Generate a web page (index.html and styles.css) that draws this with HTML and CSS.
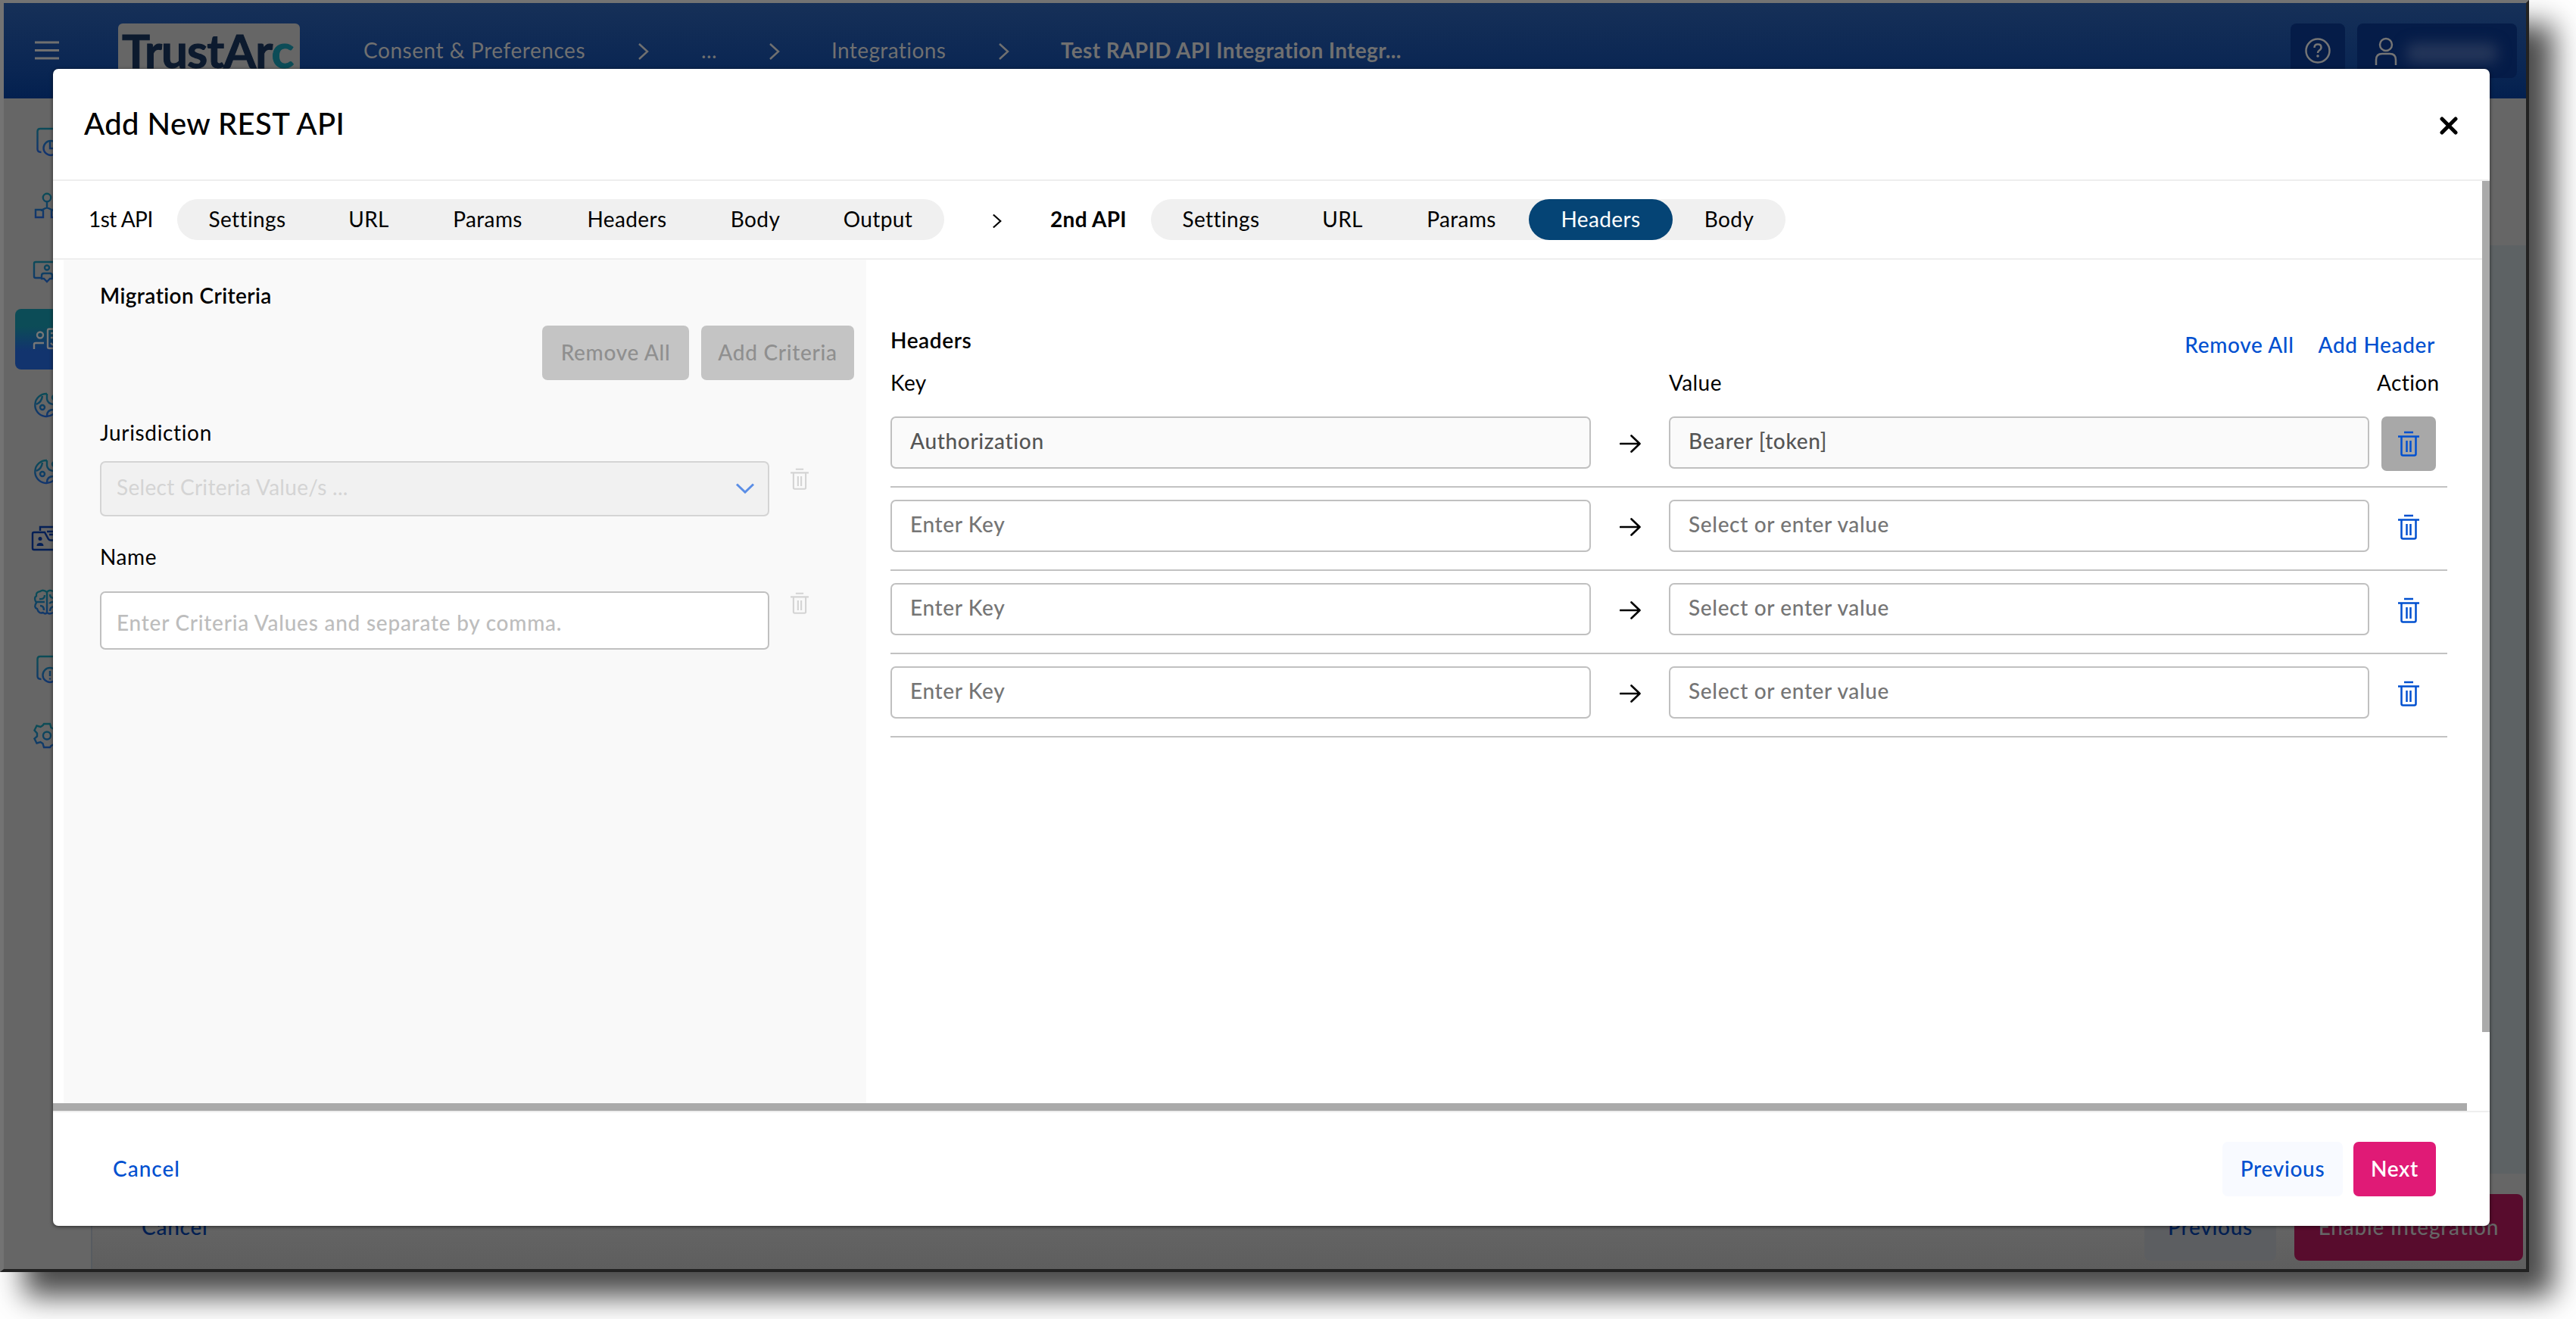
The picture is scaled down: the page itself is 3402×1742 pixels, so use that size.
FILE: index.html
```html
<!DOCTYPE html>
<html lang="en">
<head>
<meta charset="utf-8">
<title>Add New REST API</title>
<link rel="stylesheet" href="styles.css">
</head>
<body>
<svg class="defs" aria-hidden="true">
  <defs>
    <linearGradient id="ig" gradientUnits="userSpaceOnUse" x1="0" y1="28" x2="0" y2="60"><stop offset="0" stop-color="#0c4c57"/><stop offset="1" stop-color="#12346e"/></linearGradient>
    <symbol id="trash" viewBox="0 0 28 34"><path d="M8 2h12M0 7.500h28M4.500 8v22.500q0 2 2 2h15q2 0 2-2V8M11.500 13v15M16.500 13v15"/></symbol>
    <symbol id="arrow" viewBox="0 0 28 24"><path d="M1 12h25M15.500 1.500L26.500 12L15.500 22.500"/></symbol>
    <symbol id="crumb" viewBox="0 0 14 22"><path d="M1 1L12 11L1 21"/></symbol>
  </defs>
</svg>
<div class="window">
  <header class="topbar">
    <svg class="burger" viewBox="0 0 32 26"><path d="M0 2h32M0 12.500h32M0 23h32"/></svg>
    <div class="logo">TrustAr<span class="logo-c">c</span></div>
    <nav class="crumbs">
      <span class="crumb c1">Consent &amp; Preferences</span>
      <svg class="sep"><use href="#crumb"/></svg>
      <span class="crumb c2">...</span>
      <svg class="sep"><use href="#crumb"/></svg>
      <span class="crumb c3">Integrations</span>
      <svg class="sep"><use href="#crumb"/></svg>
      <span class="crumb c4">Test RAPID API Integration Integr...</span>
    </nav>
    <div class="help"><svg viewBox="0 0 36 36"><circle cx="18" cy="18" r="15.500"/><path d="M13.500 14q0-4.500 4.500-4.500t4.500 4q0 2.500-2.500 4q-2 1.300-2 3.500"/><circle class="dot" cx="18" cy="25" r="1.800"/></svg></div>
    <div class="user"><svg viewBox="0 0 30 38"><circle cx="15" cy="10" r="8"/><path d="M2 37V30q0-8 8-8h10q8 0 8 8v7"/></svg><span class="smudge"></span></div>
  </header>
  <div class="page">
    <aside class="side">
      <svg viewBox="0 0 115 88"><path d="M70 31H48q-3.500 0-3.500 3.500V58q0 4 5 4M61 47V57H71"/><circle cx="62" cy="56.500" r="9.500"/></svg>
      <svg viewBox="0 0 115 88"><circle cx="57" cy="34" r="5.200"/><path d="M57 39v9M50 52v-1.500L57 47l7 3.500V52M42 50h10v10H42zM63 50h10v10H63z"/></svg>
      <svg viewBox="0 0 115 88"><path d="M50 52H42q-2 0-2-2V33q0-2 2-2h33M50 53V49q0-3 3-3h8q3 0 3 3v4h-3l-4 4-4-4z"/><circle cx="57" cy="38.500" r="3"/></svg>
      <svg class="on" viewBox="0 0 115 88"><rect class="tile" x="15" y="5" width="100" height="80" rx="8"/><circle cx="48" cy="39.500" r="4"/><path d="M40 58V52q0-2 2-2H53M75 31.500H60q-2 0-2 2V55q0 2 2 2h15M62 37h5M62 43h5M62 50l3 3"/></svg>
      <svg viewBox="0 0 115 88"><path d="M57 29A15 15 0 1 0 71 47M57 29V36q1 6 8 7M43 43q7-3 8-11M57 58q0-8 9-8"/><circle cx="51" cy="47" r="3"/><circle cx="67" cy="34" r="3"/></svg>
      <svg viewBox="0 0 115 88"><path d="M57 29A15 15 0 1 0 71 47M57 29V36q1 6 8 7M43 43q7-3 8-11M57 58q0-8 9-8"/><circle cx="51" cy="47" r="3"/><circle cx="67" cy="34" r="3"/></svg>
      <svg class="folder" viewBox="0 0 115 88"><path d="M48 34V29H75M70 59H40q-2 0-2-2V38q0-2 2-2H54l5 9q1 1.500 3 1.500h10M57 35h8M60 39h5"/><circle class="fill" cx="48" cy="44.500" r="2.500"/><path class="fill" d="M43.500 54q0-4 4.500-4t4.500 4z"/></svg>
      <svg viewBox="0 0 115 88"><path d="M57 26V54M57 27Q52 23 48 26Q42 27 43 32Q39 35 43 41Q39 47 44 49Q46 56 52 54Q55 57 57 54M57 27Q60 23 65 26M57 54Q60 57 65 54M54 31q0 6-7 5M43 40h11M48 45q5 0 5 6M61 30q0 5 6 5M60 42q3-3 8-2M61 52q0-5 5-6"/></svg>
      <svg viewBox="0 0 115 88"><path d="M70 24H48q-3.500 0-3.500 3.500V50q0 4 5 4M61 43V50M61 52.500v2"/><circle cx="61" cy="48.500" r="9.500"/></svg>
      <svg viewBox="0 0 115 88"><path d="M53 25h8l1.500 5 4 2 5-1.500 3 6-4 4v4l4 3-3 6-5-1.500-4 2L61 56h-8l-1.500-5-3-2-5 1.500-3-6 3.500-3v-4l-3.500-4 3-6 5 1.500 3-2z"/><circle cx="57" cy="40.500" r="5"/></svg>
    </aside>
    <main class="main">
      <div class="canvas"></div>
      <footer class="page-foot">
        <span class="bg-cancel">Cancel</span>
        <span class="bg-prev">Previous</span>
        <span class="bg-enable">Enable Integration</span>
      </footer>
    </main>
  </div>

  <section class="modal">
    <header class="modal-head">
      <h1>Add New REST API</h1>
      <svg class="close" viewBox="0 0 24 24"><path d="M3 3L21 21M21 3L3 21"/></svg>
    </header>
    <div class="steps">
      <span class="api api1">1st API</span>
      <div class="pill">
        <span class="t1">Settings</span><span class="t2">URL</span><span class="t3">Params</span><span class="t4">Headers</span><span class="t5">Body</span><span class="t6">Output</span>
      </div>
      <svg class="next-step" viewBox="0 0 14 22"><use href="#crumb"/></svg>
      <span class="api api2">2nd API</span>
      <div class="pill">
        <span class="t1">Settings</span><span class="t2">URL</span><span class="t3">Params</span><span class="t4 active">Headers</span><span class="t5">Body</span>
      </div>
    </div>
    <div class="body">
      <div class="criteria">
        <h2>Migration Criteria</h2>
        <div class="criteria-actions"><button class="remove">Remove All</button><button class="add">Add Criteria</button></div>
        <label class="jur">Jurisdiction</label>
        <div class="field-row">
          <div class="select"><span>Select Criteria Value/s ...</span><svg viewBox="0 0 26 14"><path d="M2 1.500L13 12L24 1.500"/></svg></div>
          <svg class="trash-off"><use href="#trash"/></svg>
        </div>
        <label class="name">Name</label>
        <div class="field-row second">
          <div class="text-input"><span>Enter Criteria Values and separate by comma.</span></div>
          <svg class="trash-off"><use href="#trash"/></svg>
        </div>
      </div>
      <div class="headers">
        <div class="headers-top">
          <h2>Headers</h2>
          <div class="links"><a class="l1">Remove All</a><a class="l2">Add Header</a></div>
        </div>
        <div class="row cols"><span>Key</span><span></span><span>Value</span><span class="action">Action</span></div>
        <div class="row entry"><div class="box ro"><span class="k1">Authorization</span></div><svg class="arrow"><use href="#arrow"/></svg><div class="box ro"><span class="v1">Bearer [token]</span></div><div class="del off"><svg><use href="#trash"/></svg></div></div>
        <div class="row entry"><div class="box"><span class="k2">Enter Key</span></div><svg class="arrow"><use href="#arrow"/></svg><div class="box"><span class="v2">Select or enter value</span></div><div class="del"><svg><use href="#trash"/></svg></div></div>
        <div class="row entry"><div class="box"><span class="k2">Enter Key</span></div><svg class="arrow"><use href="#arrow"/></svg><div class="box"><span class="v2">Select or enter value</span></div><div class="del"><svg><use href="#trash"/></svg></div></div>
        <div class="row entry"><div class="box"><span class="k2">Enter Key</span></div><svg class="arrow"><use href="#arrow"/></svg><div class="box"><span class="v2">Select or enter value</span></div><div class="del"><svg><use href="#trash"/></svg></div></div>
      </div>
    </div>
    <div class="hscroll"></div>
    <footer class="modal-foot">
      <a class="cancel">Cancel</a>
      <button class="prev">Previous</button>
      <button class="next">Next</button>
    </footer>
    <div class="vscroll"></div>
  </section>
</div>
</body>
</html>
```
FILE: styles.css
```css
* { box-sizing: border-box; }
body { margin: 0; width: 3402px; height: 1742px; overflow: hidden; background: #fff; font: 28px/34px Lato, "Noto Sans", sans-serif; letter-spacing: .4px; color: #000; }
svg { display: block; flex: none; fill: none; stroke: currentColor; stroke-width: 2.5; }
h1, h2 { margin: 0; }
button { font: inherit; letter-spacing: inherit; border: 0; padding: 0 0 3px; border-radius: 7px; white-space: nowrap; }
span, a, label { white-space: nowrap; }
.defs { position: absolute; width: 0; height: 0; }

.window { position: relative; width: 3340px; height: 1680px; border: solid; border-width: 4px 4px 4px 5px; border-color: #737373 #222 #222 #737373; box-shadow: 32px 32px 36px rgba(0,0,0,.71); display: flex; flex-direction: column; background: #666; }
.topbar { height: 126px; flex: none; display: flex; align-items: flex-start; padding: 27px 12px 0 41px; background: linear-gradient(#163058, #0a2653 70%, #03204f); color: #707070; }
.burger { width: 32px; height: 26px; margin-top: 23px; stroke-width: 3; }
.logo { width: 240px; height: 72px; margin-left: 78px; border-radius: 6px; background: #666; color: #0c1a2e; font-size: 62px; font-weight: 700; line-height: 70px; padding-left: 5px; letter-spacing: -1px; white-space: nowrap; -webkit-text-stroke: 1px currentColor; }
.logo-c { color: #0c4c57; }
.crumbs { display: flex; margin-left: 84px; height: 72px; align-items: center; padding-bottom: 3px; }
.c1 { width: 363px; letter-spacing: .55px; }
.sep { width: 14px; height: 22px; margin-top: 4px; }
.c2 { width: 90px; margin-left: 69px; }
.c3 { width: 221px; margin-left: 68px; }
.c4 { margin-left: 68px; font-weight: 700; letter-spacing: .35px; }
.help { width: 72px; height: 72px; margin-left: auto; border-radius: 8px; background: #051c48; display: grid; place-items: center; color: #757575; }
.help svg { width: 36px; height: 36px; }
.help .dot { fill: currentColor; stroke: none; }
.user { width: 211px; height: 72px; margin-left: 16px; border-radius: 8px; background: #051c48; display: flex; padding: 18px 0 0 23px; color: #757575; }
.user svg { width: 30px; height: 38px; }
.smudge { width: 120px; height: 26px; margin: 8px 0 0 12px; background: #26375a; filter: blur(9px); border-radius: 10px; }
.page { flex: 1; display: flex; min-height: 0; }
.side { width: 115px; padding-top: 9px; }
.side svg { width: 115px; height: 88px; stroke: url(#ig); stroke-width: 2.4; }
.side .on { stroke: #777; }
.side .tile { fill: url(#ig); stroke: none; }
.side .folder { stroke: #031f56; }
.side .fill { fill: #031f56; stroke: none; }
.main { flex: 1; display: flex; flex-direction: column; padding-top: 194px; border-left: 2px solid #575b60; }
.canvas { height: 1226px; background: #5d6264; }
.page-foot { flex: 1; display: flex; background: linear-gradient(#666 40%, #5e5e5e); padding: 27px 4px 0 65px; line-height: 87px; font-weight: 500; letter-spacing: .75px; }
.bg-cancel, .bg-prev, .bg-enable { height: 88px; border-radius: 8px; color: #021f52; }
.bg-prev { width: 174px; margin-left: auto; background: #5c5e61; text-align: center; }
.bg-enable { width: 302px; margin-left: 24px; background: #580c2d; color: #666; text-align: center; }

.modal { position: absolute; left: 65px; top: 87px; width: 3218px; height: 1528px; background: #fff; border-radius: 7px; box-shadow: 0 1px 5px rgba(0,0,0,.6); display: flex; flex-direction: column; }
.modal-head { height: 148px; display: flex; align-items: center; justify-content: space-between; padding: 0 42px 2px 41px; border-bottom: 2px solid #eee; }
h1 { font-size: 40px; line-height: 48px; font-weight: 500; letter-spacing: .4px; }
.close { width: 24px; height: 24px; stroke-width: 5; stroke-linecap: round; margin-top: 6px; }
.steps { height: 104px; margin-right: 10px; padding-left: 47px; display: flex; align-items: center; border-bottom: 2px solid #eee; }
.api1 { width: 117px; margin-top: -3px; letter-spacing: -.5px; }
.api2 { width: 133px; margin: -3px 0 0 64px; font-weight: 700; letter-spacing: .3px; }
.pill { height: 54px; border-radius: 27px; background: #f0f0f0; display: flex; }
.pill span { text-align: center; line-height: 52px; height: 54px; }
.t1 { width: 185px; } .t2 { width: 136px; } .t3 { width: 178px; } .t4 { width: 190px; } .t5 { width: 149px; } .t6 { width: 175px; }
.pill .active { background: #054475; color: #fff; border-radius: 27px; }
.next-step { width: 12px; height: 20px; margin: 4px 0 0 64px; }
.body { height: 1114px; display: flex; }
.criteria { width: 1060px; margin-left: 14px; background: #f9f9f9; padding: 30px 16px 0 48px; }
h2 { font-size: 28px; line-height: 34px; font-weight: 600; }
.criteria-actions { display: flex; justify-content: flex-end; gap: 16px; margin-top: 23px; font-weight: 500; letter-spacing: .7px; }
.criteria-actions button { height: 72px; background: #c4c4c4; color: #8f8f8f; }
.remove { width: 194px; } .add { width: 202px; }
.jur { display: block; margin-top: 52px; letter-spacing: .65px; }
.name { display: block; margin-top: 36px; letter-spacing: .6px; }
.field-row { display: flex; margin-top: 21px; gap: 28px; align-items: flex-start; }
.field-row.second { margin-top: 29px; }
.select, .text-input { width: 884px; border: 2px solid #d4d4d4; border-radius: 7px; display: flex; align-items: center; justify-content: space-between; padding: 0 17px 5px 20px; }
.select { height: 73px; background: #f1f1f1; color: #d4d4d4; letter-spacing: .3px; }
.select svg { width: 26px; height: 14px; color: #5b8ee6; stroke-width: 3; margin-top: 4px; }
.text-input { height: 77px; background: #fff; border-color: #c0c0c0; color: #bdbdbd; padding: 4px 0 0 20px; font-weight: 500; letter-spacing: .75px; }
.trash-off { width: 24px; height: 29px; margin-top: 9px; color: #d4d4d4; }
.second .trash-off { margin-top: 1px; }
.headers { width: 2088px; padding: 89px 0 0 32px; }
.headers-top { height: 56px; display: flex; justify-content: space-between; padding-right: 16px; }
.headers-top h2 { letter-spacing: .6px; }
.links { display: flex; gap: 32px; margin-top: 6px; color: #0050d0; font-weight: 500; letter-spacing: .65px; }
.row { display: grid; grid-template-columns: 925px 103px 925px 72px; column-gap: 0; }
.cols { margin-bottom: 28px; height: 34px; }
.action { margin-left: 10px; }
.entry { border-bottom: 2px solid #c2c2c2; height: 94px; margin-bottom: 16px; align-items: start; }
.box { height: 69px; border: 2px solid #c0c0c0; border-radius: 7px; display: flex; align-items: center; padding: 0 0 5px 24px; color: #757575; font-weight: 500; letter-spacing: .65px; }
.box.ro { background: #fafafa; color: #555; }
.arrow { width: 28px; height: 24px; margin: 24px 0 0 38px; stroke-width: 2.6; stroke-linecap: round; stroke-linejoin: round; }
.del { width: 72px; height: 72px; margin-left: 16px; border-radius: 7px; display: grid; place-items: center; color: #0050d0; }
.del.off { background: #a8a8a8; }
.del svg { width: 28px; height: 34px; }
.hscroll { width: 3188px; height: 10px; background: #aaa; }
.modal-foot { flex: 1; border-top: 2px solid #eee; display: flex; padding: 39px 71px 0 79px; font-weight: 500; color: #0050d0; letter-spacing: .7px; }
.cancel { line-height: 70px; letter-spacing: 1px; }
.modal-foot button { height: 72px; color: #0050d0; background: #f8faff; }
.prev { width: 159px; margin-left: auto; }
.modal-foot .next { width: 109px; margin-left: 14px; background: #e01a76; color: #fff; font-weight: 600; }
.vscroll { position: absolute; right: 0; top: 148px; width: 10px; height: 1124px; background: #aaa; }
```
